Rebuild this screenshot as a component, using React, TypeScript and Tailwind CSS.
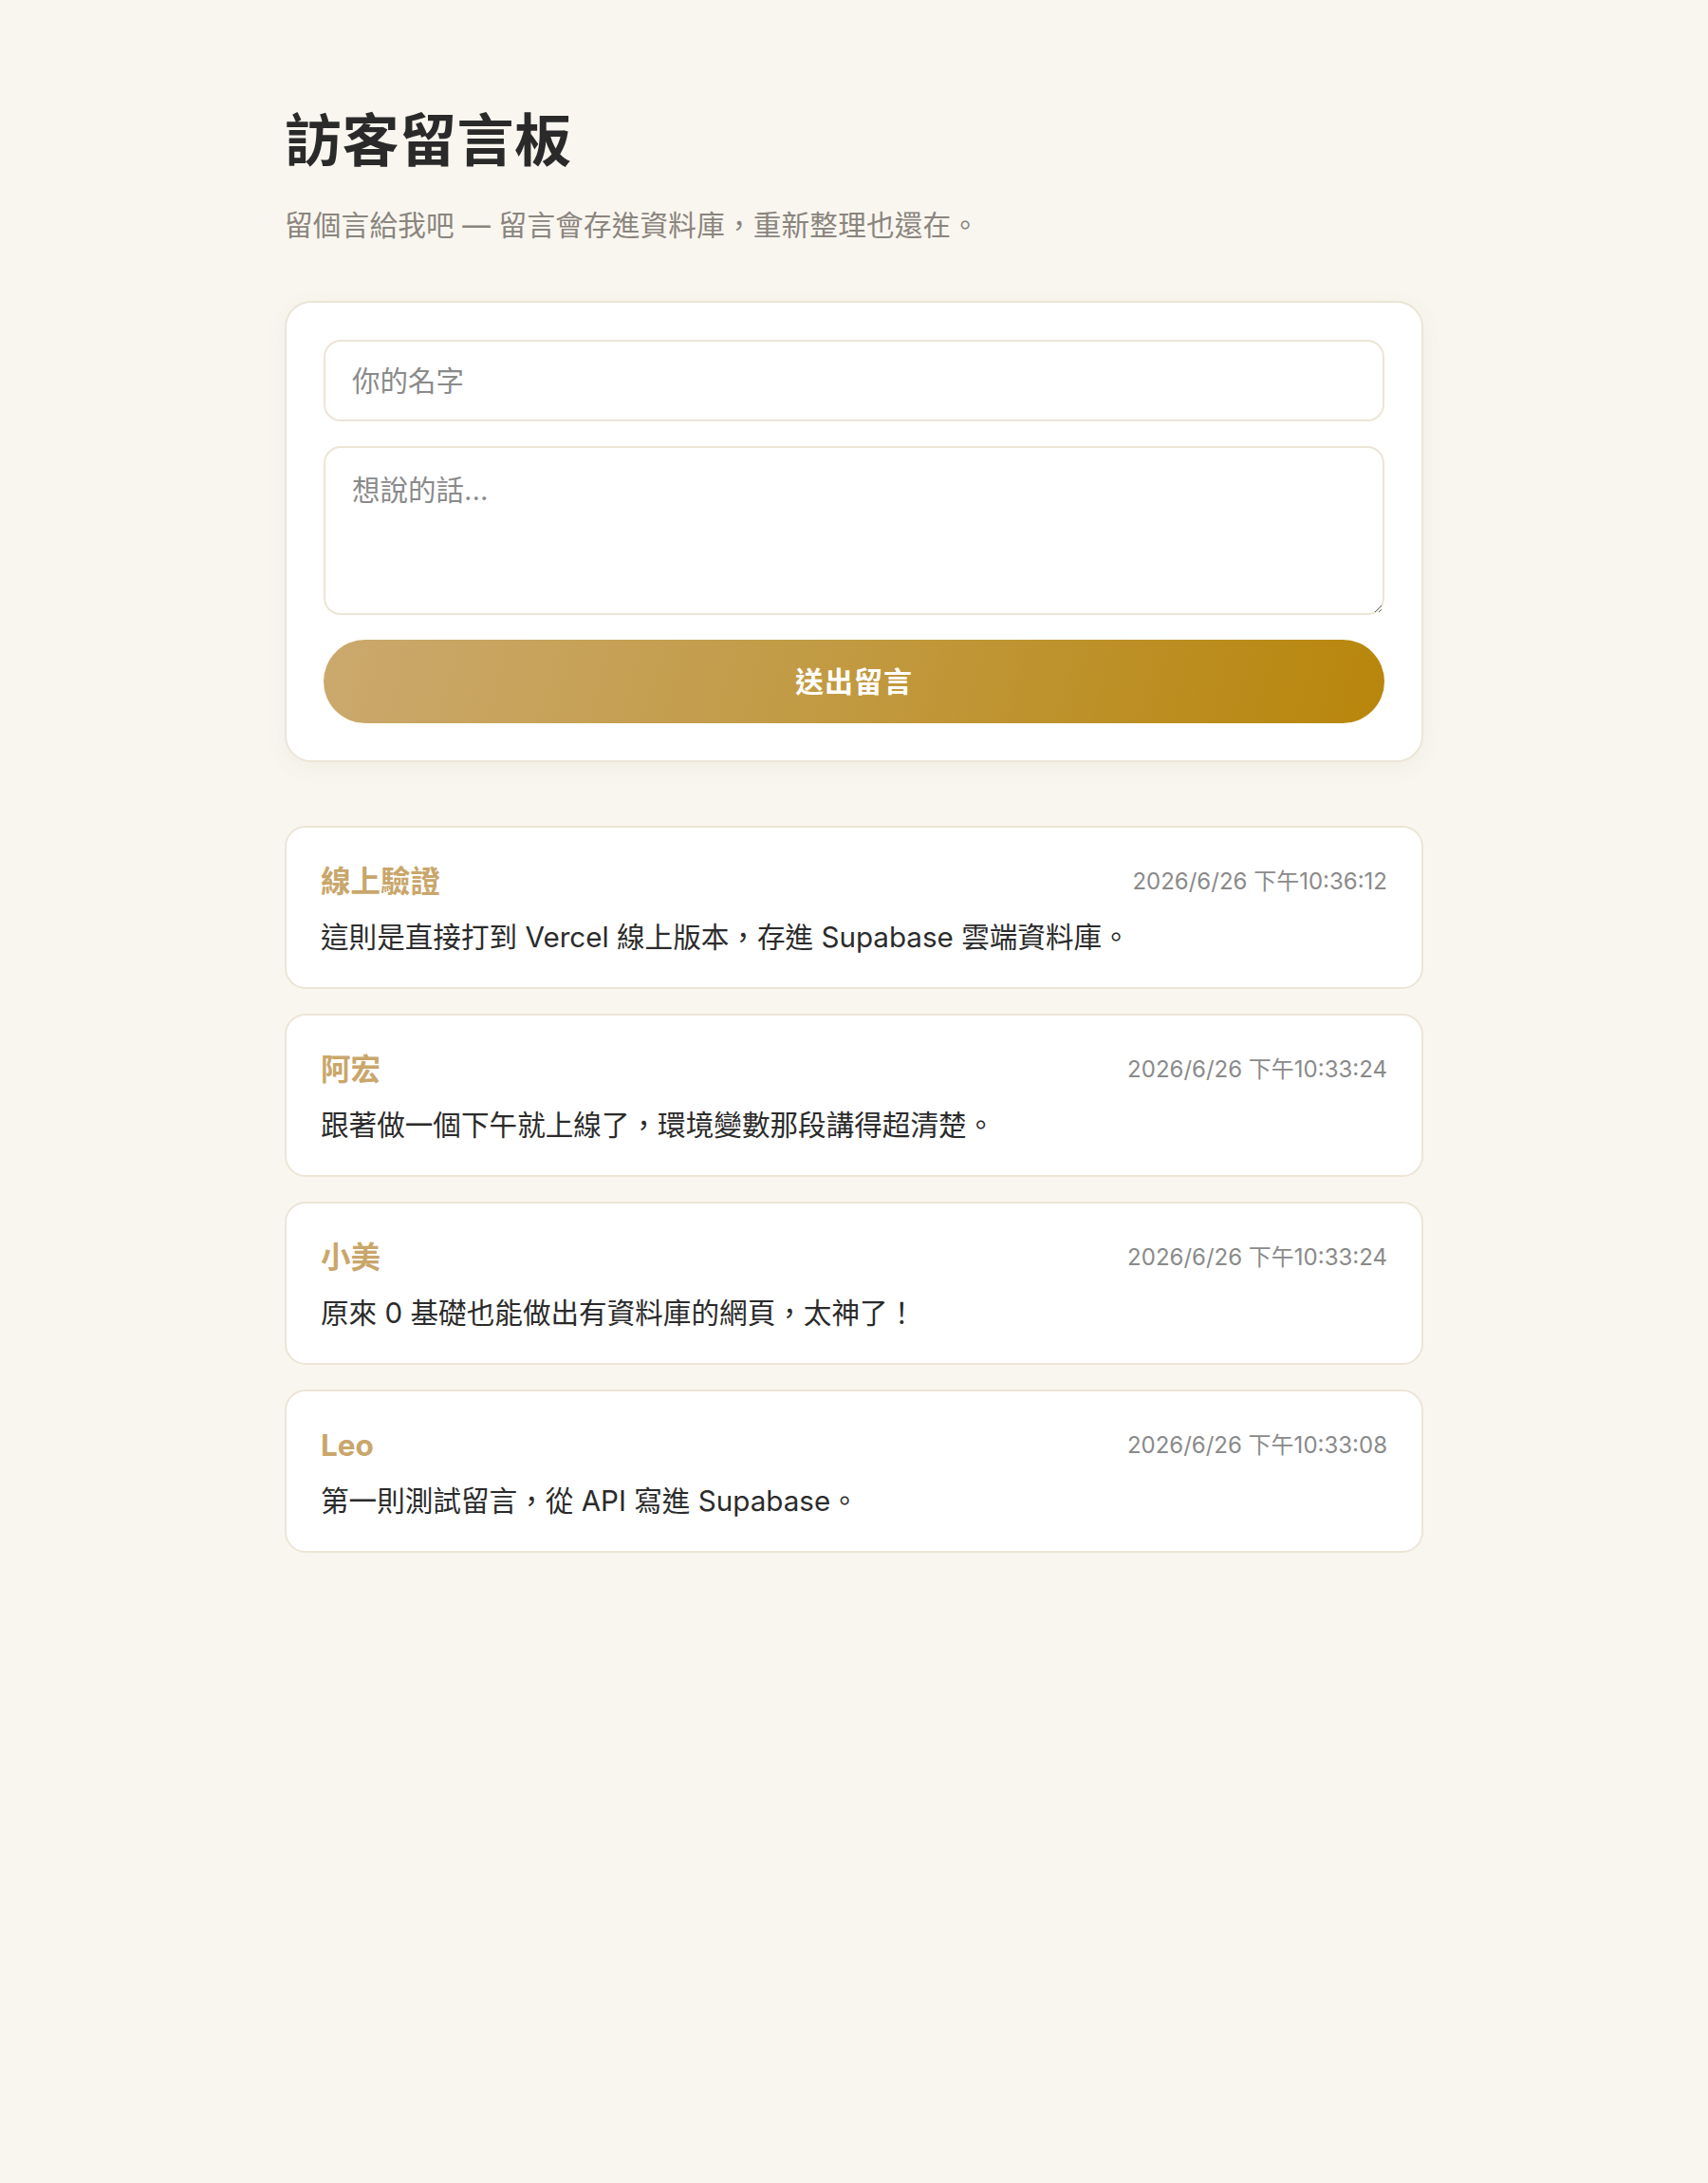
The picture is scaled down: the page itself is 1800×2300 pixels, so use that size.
import React from "react";

const FONT = "font-['Inter','Noto_Sans_CJK_TC',sans-serif]";

const messages = [
  { name: "線上驗證", time: "2026/6/26 下午10:36:12", text: "這則是直接打到 Vercel 線上版本，存進 Supabase 雲端資料庫。" },
  { name: "阿宏", time: "2026/6/26 下午10:33:24", text: "跟著做一個下午就上線了，環境變數那段講得超清楚。" },
  { name: "小美", time: "2026/6/26 下午10:33:24", text: "原來 0 基礎也能做出有資料庫的網頁，太神了！" },
  { name: "Leo", time: "2026/6/26 下午10:33:08", text: "第一則測試留言，從 API 寫進 Supabase。" },
];

export default function App() {
  return (
    <div className={`min-h-screen bg-[#f9f6ef] ${FONT} text-[#2b2b2b]`}>
      <div className="mx-auto w-[1200px] pt-[112px] pb-[120px]">
        {/* HEADER */}
        <h1 className="text-[60px] font-bold leading-[72px] tracking-[0.5px] text-[#2a2a2a]">訪客留言板</h1>
        <p className="mt-[31px] text-[29.6px] leading-[44px] tracking-[0.2px] text-[#8a857e]">
          留個言給我吧 — 留言會存進資料庫，重新整理也還在。
        </p>

        {/* FORM */}
        <form
          className="mt-[58px] flex flex-col gap-[26px] rounded-[28px] border-2 border-[#ece5d6] bg-white p-[39px] shadow-[0_6px_24px_rgba(120,100,60,0.06)]"
          onSubmit={(e) => e.preventDefault()}
        >
          <input
            type="text"
            placeholder="你的名字"
            className="h-[86px] w-full rounded-[18px] border-2 border-[#ece5d6] bg-white px-[28px] text-[29.5px] text-[#2b2b2b] placeholder:text-[#8a8a8a] outline-none"
          />
          <textarea
            placeholder="想說的話..."
            className="h-[178px] w-full rounded-[18px] border-2 border-[#ece5d6] bg-white px-[28px] py-[24px] text-[29.5px] leading-[40px] text-[#2b2b2b] placeholder:text-[#8a8a8a] outline-none"
          />
          <button
            type="submit"
            className="h-[88px] w-full rounded-full bg-[linear-gradient(105deg,#cba96e_0%,#c29b45_45%,#b8860b_100%)] text-[30px] font-bold tracking-[1px] text-white"
          >
            送出留言
          </button>
        </form>

        {/* MESSAGES */}
        <div className="mt-[67px] flex flex-col gap-[26px]">
          {messages.map((m, i) => (
            <div
              key={i}
              className="flex h-[172px] flex-col rounded-[22px] border-2 border-[#ece5d6] bg-white px-[36px] pt-[34px]"
            >
              <div className="flex items-center justify-between">
                <span className="text-[31.5px] font-bold leading-[46px] text-[#c9a66b]">{m.name}</span>
                <span className="text-[24px] leading-[46px] text-[#8a8a8a]">{m.time}</span>
              </div>
              <p className="mt-[12px] text-[29.6px] leading-[46px] text-[#2b2b2b]">{m.text}</p>
            </div>
          ))}
        </div>
      </div>
    </div>
  );
}
